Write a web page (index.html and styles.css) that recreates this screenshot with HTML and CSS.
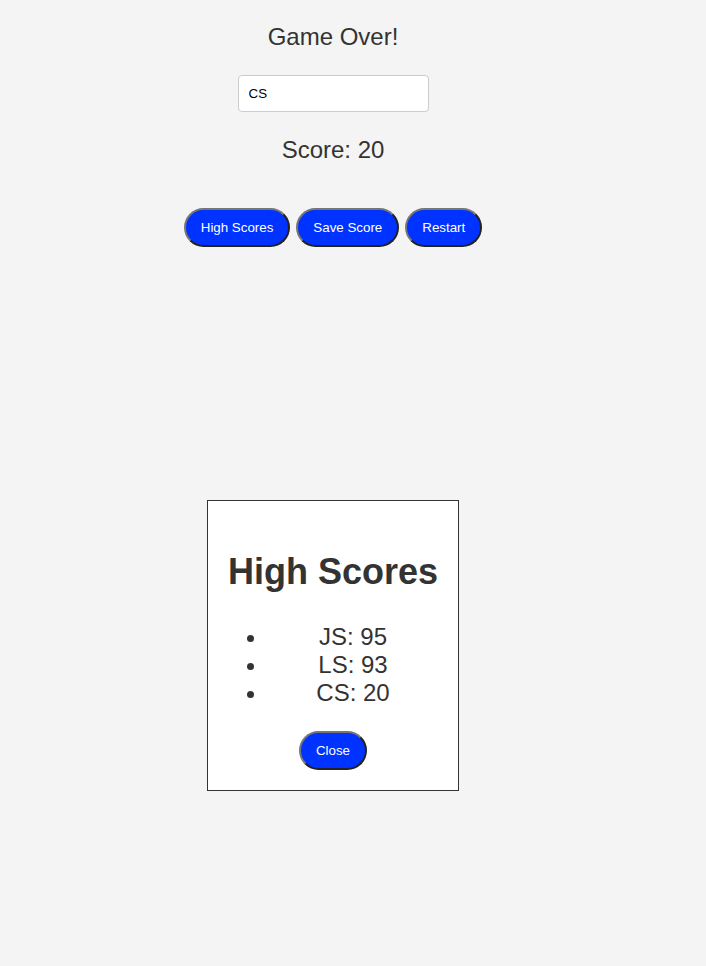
FILE: index.html
```html
<!DOCTYPE html>
<html>
<head>
<meta charset="utf-8">
<title>Game Over</title>
<link rel="stylesheet" href="styles.css">
</head>
<body>
<div class="container">
  <h1 class="title">Game Over!</h1>
  <input class="name-input" type="text" value="CS">
  <p class="score">Score: 20</p>
  <div class="actions">
    <button class="btn">High Scores</button>
    <button class="btn">Save Score</button>
    <button class="btn">Restart</button>
  </div>
  <div class="modal">
    <h2 class="modal-title">High Scores</h2>
    <ul class="score-list">
      <li>JS: 95</li>
      <li>LS: 93</li>
      <li>CS: 20</li>
    </ul>
    <button class="btn">Close</button>
  </div>
</div>
</body>
</html>
```
FILE: styles.css
```css
html, body {
  background: #f4f4f4;
}
body {
  margin: 8px;
  font-family: "Liberation Sans", Arial, sans-serif;
  color: #333;
}
.container {
  width: 650px;
  padding-top: 15px;
  display: flex;
  flex-direction: column;
  align-items: center;
  text-align: center;
}
.title {
  margin: 0;
  font-size: 24px;
  font-weight: normal;
  line-height: 28px;
}
.name-input {
  margin: 24px 0 0;
  width: 169px;
  padding: 10px;
  border: 1px solid #ccc;
  border-radius: 4px;
  background: #fff;
  font-family: "Liberation Sans", Arial, sans-serif;
  font-size: 13.333px;
  line-height: 15px;
  color: #000;
  outline: none;
}
.score {
  margin: 24px 0 0;
  font-size: 24px;
  line-height: 28px;
}
.actions {
  margin-top: 44px;
  display: flex;
  gap: 6px;
  justify-content: center;
}
.btn {
  margin: 0;
  padding: 10px 15px;
  border: 2px outset #767676;
  border-radius: 20px;
  background: #0033ff;
  color: #fff;
  font-family: "Liberation Sans", Arial, sans-serif;
  font-size: 13.333px;
  line-height: 15px;
  cursor: pointer;
}
.modal {
  margin-top: 253px;
  width: 210px;
  padding: 20px;
  border: 1px solid #333;
  background: #fff;
  display: flex;
  flex-direction: column;
  align-items: center;
}
.modal-title {
  margin: 30px 0 0;
  font-size: 36px;
  font-weight: bold;
  line-height: 42px;
  white-space: nowrap;
}
.score-list {
  align-self: stretch;
  margin: 30px 0 24px;
  padding-left: 40px;
  font-size: 24px;
  line-height: 28px;
}
```
